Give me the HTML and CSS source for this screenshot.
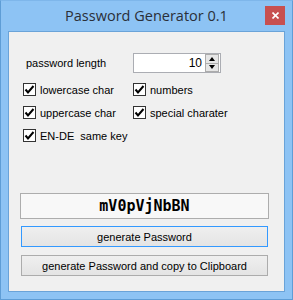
FILE: index.html
```html
<!DOCTYPE html>
<html lang="en">
  <head>
    <meta charset="UTF-8" />
    <title>Password Generator 0.1</title>
    <link rel="stylesheet" href="styles.css">
  </head>
  <body>
    <div class="window">
      <div class="titlebar">
        <span class="title">Password Generator 0.1</span>
        <button class="close" type="button">
          <svg width="7" height="7" viewBox="0 0 7 7">
            <path d="M0.5 0.5 L6.5 6.5 M6.5 0.5 L0.5 6.5" stroke="#fff" stroke-width="1.6" />
          </svg>
        </button>
      </div>

      <div class="client">
        <div class="options">
          <div class="row length-row">
            <span class="length-label">password length</span>
            <div class="spin">
              <span class="spin-value">10</span>
              <div class="spin-buttons">
                <span class="spin-btn"><span class="arrow up"></span></span>
                <span class="spin-btn"><span class="arrow down"></span></span>
              </div>
            </div>
          </div>

          <div class="row">
            <label class="check"><span class="box"><svg width="11" height="11" viewBox="0 0 11 11"><path d="M1.5 5.5 L4 8.5 L9.5 2" fill="none" stroke="#000" stroke-width="2" /></svg></span>lowercase char</label>
            <label class="check"><span class="box"><svg width="11" height="11" viewBox="0 0 11 11"><path d="M1.5 5.5 L4 8.5 L9.5 2" fill="none" stroke="#000" stroke-width="2" /></svg></span>numbers</label>
          </div>

          <div class="row">
            <label class="check"><span class="box"><svg width="11" height="11" viewBox="0 0 11 11"><path d="M1.5 5.5 L4 8.5 L9.5 2" fill="none" stroke="#000" stroke-width="2" /></svg></span>uppercase char</label>
            <label class="check"><span class="box"><svg width="11" height="11" viewBox="0 0 11 11"><path d="M1.5 5.5 L4 8.5 L9.5 2" fill="none" stroke="#000" stroke-width="2" /></svg></span>special charater</label>
          </div>

          <div class="row last-row">
            <label class="check"><span class="box"><svg width="11" height="11" viewBox="0 0 11 11"><path d="M1.5 5.5 L4 8.5 L9.5 2" fill="none" stroke="#000" stroke-width="2" /></svg></span>EN-DE&nbsp; same key</label>
          </div>
        </div>

        <div class="bottom">
          <div class="result">mV0pVjNbBN</div>
          <button class="btn focused" type="button">generate Password</button>
          <button class="btn" type="button">generate Password and copy to Clipboard</button>
        </div>
      </div>
    </div>
  </body>
</html>
```

FILE: styles.css
```css
* {
  margin: 0;
  padding: 0;
  box-sizing: border-box;
}

body {
  width: 293px;
  height: 300px;
  overflow: hidden;
  font-family: "Liberation Sans", Arial, sans-serif;
  font-size: 11px;
  color: #000;
}

.window {
  width: 293px;
  height: 300px;
  background: #8dc3f4;
  border: 1px solid #5e9dd6;
  border-top-color: #7eb6ea;
  display: flex;
  flex-direction: column;
  padding: 0 7px 7px 7px;
}

.titlebar {
  height: 30px;
  display: flex;
  align-items: center;
  justify-content: center;
  position: relative;
}

.title {
  font-family: "Open Sans", "Noto Sans", sans-serif;
  font-size: 14.5px;
  color: #2a2f38;
  margin-top: -1px;
}

.close {
  position: absolute;
  right: 0;
  top: 5px;
  width: 20px;
  height: 19px;
  border: none;
  background: #c75050;
  display: flex;
  align-items: center;
  justify-content: center;
}

.client {
  flex: 1;
  background: #f0f0f0;
  border: 1px solid #6aa3d8;
  display: flex;
  flex-direction: column;
}

.options {
  padding: 21px 0 0 14px;
}

.row {
  display: flex;
  align-items: center;
  height: 13px;
  margin-bottom: 10px;
}

.length-row {
  height: 20px;
}

.last-row {
  margin-bottom: 0;
}

.length-label {
  width: 110px;
  padding-left: 3px;
  margin-top: -1px;
}

.spin {
  width: 88px;
  height: 20px;
  background: #fff;
  border: 1px solid #abadb3;
  display: flex;
  align-items: center;
  justify-content: flex-end;
}

.spin-value {
  padding-right: 3px;
  font-size: 12px;
}

.spin-buttons {
  width: 14px;
  height: 18px;
  display: flex;
  flex-direction: column;
  margin-right: 1px;
}

.spin-btn {
  flex: 1;
  background: #e6e6e6;
  border: 1px solid #acacac;
  display: flex;
  align-items: center;
  justify-content: center;
}

.spin-btn + .spin-btn {
  border-top: none;
}

.arrow {
  width: 0;
  height: 0;
  border-left: 3.5px solid transparent;
  border-right: 3.5px solid transparent;
}

.arrow.up {
  border-bottom: 4px solid #000;
}

.arrow.down {
  border-top: 4px solid #000;
}

.check {
  width: 110px;
  display: flex;
  align-items: center;
  gap: 4px;
}

.box {
  width: 13px;
  height: 13px;
  background: #fff;
  border: 1px solid #333;
  display: flex;
  align-items: center;
  justify-content: center;
  flex-shrink: 0;
}

.bottom {
  margin-top: auto;
  padding: 0 16px 15px 11px;
  display: flex;
  flex-direction: column;
}

.result {
  height: 26px;
  width: 249px;
  border: 1px solid #adadad;
  background: #f8f8f8;
  display: flex;
  align-items: center;
  justify-content: center;
  font-family: "DejaVu Sans Mono", monospace;
  font-weight: bold;
  font-size: 15px;
  margin-bottom: 7px;
}

.btn {
  width: 247px;
  height: 21px;
  margin-left: 1px;
  border: 1px solid #acacac;
  background: linear-gradient(#efefef, #e4e4e4);
  font-family: "Liberation Sans", Arial, sans-serif;
  font-size: 11px;
  color: #000;
}

.btn.focused {
  border-color: #3399ff;
  margin-bottom: 8px;
}
```
